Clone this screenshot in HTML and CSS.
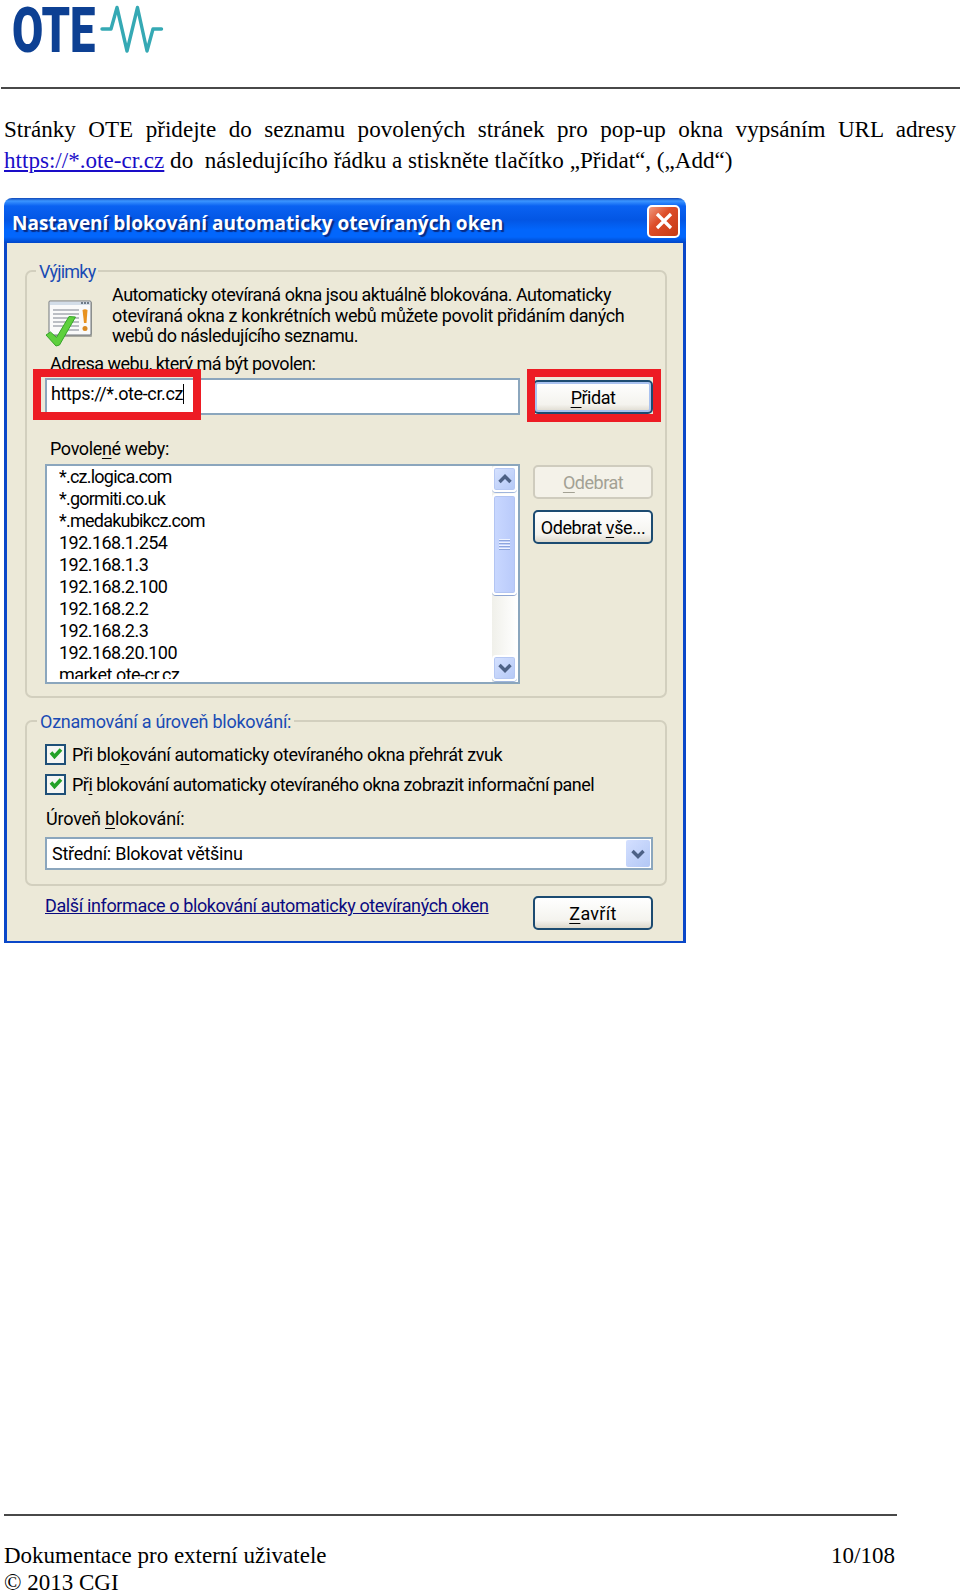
FILE: index.html
```
<!DOCTYPE html>
<html lang="cs">
<head>
  <meta charset="UTF-8" />
  <meta name="viewport" content="width=device-width, initial-scale=1.0"/>
  <title>Dokumentace pro externí uživatele</title>
  <link rel="stylesheet" href="styles.css">
</head>
<body>
  <header class="page-header">
    <svg class="logo" width="170" height="60" viewBox="0 0 170 60">
      <text class="logo-text" transform="translate(12 51.5) scale(0.86 1.33)" textLength="97" lengthAdjust="spacingAndGlyphs">OTE</text>
      <path d="M102 29 H111 L117 7.500 L127 51 L137.500 7.500 L147 51 L153 29 H161.500" fill="none" stroke="#35a9b4" stroke-width="3.400" stroke-linejoin="round" stroke-linecap="round"/>
    </svg>
  </header>

  <p class="intro">
    <span class="intro-line first">Stránky OTE přidejte do seznamu povolených stránek pro pop-up okna vypsáním URL adresy</span>
    <span class="intro-line"><a href="#">https://*.ote-cr.cz</a> do&nbsp; následujícího řádku a stiskněte tlačítko „Přidat“, („Add“)</span>
  </p>

  <div class="dialog">
    <div class="titlebar">
      <span class="title">Nastavení blokování automaticky otevíraných oken</span>
      <button class="close"><svg width="20" height="20" viewBox="0 0 20 20"><path d="M3 3 L17 17 M17 3 L3 17" stroke="#fff" stroke-width="3.200"/></svg></button>
    </div>
    <div class="dialog-body">
      <section class="group exceptions">
        <h2 class="legend legend-exceptions">Výjimky</h2>
        <div class="info">
          <svg class="info-icon" width="50" height="50" viewBox="0 0 50 50">
            <rect x="4" y="3" width="43" height="35" rx="1" fill="#a9a99f"/>
            <rect x="4" y="2" width="42" height="34" rx="1" fill="#fafafa" stroke="#70777d"/>
            <rect x="5" y="3" width="40" height="3" fill="#d3dde8"/>
            <path d="M36 4 h2 M39 4 h2 M42 4 h2" stroke="#4f5b68" stroke-width="1.500"/>
            <path d="M8 11 H34 M8 15 H34 M8 19 H34 M8 23 H34 M8 27 H34 M16 31 H34" stroke="#a7abb3" stroke-width="1.300"/>
            <path d="M37.500 11 Q40 9.500 42.500 11 L41.500 24 H39 Z" fill="#e8921e"/>
            <circle cx="40" cy="29.500" r="2.500" fill="#d98a22"/>
            <path d="M1 36 L5.500 33 L11.500 38.500 L24 17.500 L30.500 18 L14.500 46 L11 47 Z" fill="#5ed03d" stroke="#36a428"/>
          </svg>
          <p class="info-text">
            <span class="tight">Automaticky otevíraná okna jsou aktuálně blokována. Automaticky</span>
            <span>otevíraná okna z konkrétních webů můžete povolit přidáním daných</span>
            <span class="tight">webů do následujícího seznamu.</span>
          </p>
        </div>
        <label class="field-label tight">Adresa webu, který má být povolen:</label>
        <div class="address-row">
          <div class="address-input">https://*.ote-cr.cz<i class="caret"></i><b class="mark mark-url"></b></div>
          <div class="btn btn-default"><span class="tight"><u>P</u>řidat</span><b class="mark mark-add"></b></div>
        </div>
        <label class="field-label list-label">Povole<u>n</u>é weby:</label>
        <div class="list-row">
          <div class="listbox">
            <ul class="sites">
              <li class="host">*.cz.logica.com</li>
              <li class="host">*.gormiti.co.uk</li>
              <li class="host">*.medakubikcz.com</li>
              <li>192.168.1.254</li>
              <li>192.168.1.3</li>
              <li>192.168.2.100</li>
              <li>192.168.2.2</li>
              <li>192.168.2.3</li>
              <li>192.168.20.100</li>
              <li>market.ote-cr.cz</li>
            </ul>
            <div class="scrollbar">
              <div class="scroll-btn"><svg width="14" height="10" viewBox="0 0 14 10"><path d="M1.500 8 L7 2.500 L12.500 8" fill="none" stroke="#4d6185" stroke-width="3.400"/></svg></div>
              <div class="thumb"><i></i><i></i><i></i><i></i></div>
              <div class="scroll-btn down"><svg width="14" height="10" viewBox="0 0 14 10"><path d="M1.500 2 L7 7.500 L12.500 2" fill="none" stroke="#4d6185" stroke-width="3.400"/></svg></div>
            </div>
          </div>
          <div class="list-buttons">
            <div class="btn btn-disabled"><span class="tight"><u>O</u>debrat</span></div>
            <div class="btn btn-all"><span>Odebrat <u>v</u>še...</span></div>
          </div>
        </div>
      </section>

      <section class="group notify">
        <h2 class="legend legend-notify">Oznamování a úroveň blokování:</h2>
        <div class="check"><span class="box"><svg width="14" height="14" viewBox="0 0 14 14"><path d="M2 5.500 L5.500 9.500 L12 2.500" fill="none" stroke="#23a127" stroke-width="3.600"/></svg></span><span>Při blo<u>k</u>ování automaticky otevíraného okna přehrát zvuk</span></div>
        <div class="check"><span class="box"><svg width="14" height="14" viewBox="0 0 14 14"><path d="M2 5.500 L5.500 9.500 L12 2.500" fill="none" stroke="#23a127" stroke-width="3.600"/></svg></span><span class="tight">Př<u>i</u> blokování automaticky otevíraného okna zobrazit informační panel</span></div>
        <label class="level-label">Úroveň <u>b</u>lokování:</label>
        <div class="select"><span>Střední: Blokovat většinu</span>
          <span class="select-btn"><svg width="14" height="10" viewBox="0 0 14 10"><path d="M1.500 2 L7 7.500 L12.500 2" fill="none" stroke="#4d6185" stroke-width="3.400"/></svg></span>
        </div>
      </section>

      <div class="dialog-footer">
        <a class="more" href="#">Další informace o blokování automaticky otevíraných oken</a>
        <div class="btn btn-close"><span><u>Z</u>avřít</span></div>
      </div>
    </div>
  </div>

  <footer class="page-footer">
    <div>Dokumentace pro externí uživatele<br>© 2013 CGI</div>
    <div>10/108</div>
  </footer>
</body>
</html>
```
FILE: styles.css
```
* {
  box-sizing: border-box;
}

body {
  display: flex;
  flex-direction: column;
  height: 1593px;
  margin: 0;
  background: #fff;
  color: #000;
  font-family: "Liberation Serif", serif;
  font-size: 23px;
  overflow: hidden;
}

.page-header {
  height: 89px;
  margin-left: 1px;
  border-bottom: 2px solid #484848;
}

.logo {
  display: block;
  margin-left: -1px;
  overflow: visible;
}

.logo-text {
  font-family: Roboto, sans-serif;
  font-weight: 900;
  font-size: 48px;
  fill: #0d4093;
}

.intro {
  margin: 25px 4px 0;
  height: 84px;
  font-size: 23.1px;
  line-height: 30.5px;
}

.intro-line {
  display: block;
  white-space: nowrap;
}

.intro-line.first {
  white-space: normal;
  text-align-last: justify;
}

.intro a { color: #1a0dc8; }

/* dialog window */
.dialog {
  width: 682px;
  height: 745px;
  margin-left: 4px;
  display: flex;
  flex-direction: column;
  font-family: Roboto, sans-serif;
  font-size: 18px;
  line-height: 20px;
  letter-spacing: -0.37px;
  white-space: nowrap;
}

.tight { letter-spacing: -0.49px; }

.titlebar {
  height: 45px;
  display: flex;
  justify-content: space-between;
  align-items: center;
  padding: 1px 6px 0 8px;
  border-radius: 8px 8px 0 0;
  background: linear-gradient(#1048b8 0, #3b95ff 3px, #0a62f2 8px, #0356e4 22px, #0266fc 32px, #0266fc 39px, #0046c8 45px);
}

.title {
  padding-top: 4px;
  color: #fff;
  font-family: "Open Sans", sans-serif;
  font-weight: 700;
  font-size: 19px;
  letter-spacing: 0;
  text-shadow: 2px 2px 1px #0a2a80;
}

.close {
  display: flex;
  align-items: center;
  justify-content: center;
  width: 33px;
  height: 33px;
  padding: 0;
  border: 2px solid #fff;
  border-radius: 5px;
  background: linear-gradient(135deg, #f09a80, #dd4d28 40%, #c63a14);
}

.dialog-body {
  flex: 1;
  padding: 27px 16px 0 18px;
  background: #ece9d8;
  border: solid #0a47c8;
  border-width: 0 3px 2px 3px;
}

.group {
  border: 2px solid #d2cfbe;
  border-radius: 7px;
}

.exceptions { height: 428px; padding: 0 11px 0 18px; }

.legend {
  width: max-content;
  margin: -10px 0 0 -8px;
  padding: 0 3px;
  background: #ece9d8;
  color: #1a4bb4;
  font-size: 18px;
  font-weight: 400;
}

.legend-exceptions {
  margin-left: -9px;
  letter-spacing: -0.8px;
}

.legend-notify { letter-spacing: -0.23px; }

.info {
  display: flex;
  height: 66px;
  margin-top: 4px;
}

.info-icon { margin-top: 13px; }

.info-text {
  display: flex;
  flex-direction: column;
  align-items: flex-start;
  margin: -1px 0 0 17px;
  line-height: 20.5px;
}

.field-label { display: block; height: 26px; padding: 2px 0 0 5px; }

.address-row {
  display: flex;
  justify-content: space-between;
  padding-right: 1px;
}

.address-input {
  position: relative;
  display: flex;
  width: 475px;
  height: 37px;
  padding: 4px;
  background: #fff;
  border: 2px solid #8ba6bd;
}

.caret { width: 1px; height: 20px; background: #000; }

.btn {
  position: relative;
  display: flex;
  align-items: center;
  justify-content: center;
  width: 120px;
  height: 34px;
  padding-top: 1px;
  border: 2px solid #1c4b71;
  border-radius: 5px;
  background: linear-gradient(#fff, #f4f3ee 75%, #dcd8cc);
}

.btn-default {
  margin-top: 2px;
  box-shadow: inset 0 0 0 2px #a9c2f0;
}

.btn-disabled {
  color: #a3a194;
  border-color: #cfccbe;
  background: #f4f2e9;
}

.btn-close { letter-spacing: 0.3px; }

/* red highlight frames over the form */
.mark {
  position: absolute;
  border: 8px solid #ed1c24;
}

.mark-url { left: -14px; top: -11px; width: 168px; height: 51px; }
.mark-add { left: -8px; top: -13px; width: 134px; height: 53px; }

.list-label { height: 49px; padding-top: 24px; }

.list-row {
  display: flex;
  justify-content: space-between;
  padding-right: 1px;
}

.listbox {
  display: flex;
  justify-content: space-between;
  width: 475px;
  height: 220px;
  padding: 0 1px 3px 12px;
  background: #fff;
  border: 2px solid #8ba6bd;
}

.sites {
  margin: 0;
  padding: 0;
  list-style: none;
  line-height: 22px;
  letter-spacing: -0.54px;
  overflow: hidden;
}

.sites .host { letter-spacing: -0.77px; }

.scrollbar {
  display: flex;
  flex-direction: column;
  width: 25px;
  height: 216px;
  gap: 2px;
  background: linear-gradient(90deg, #f0f0ea, #fff);
}

.scroll-btn {
  display: flex;
  align-items: center;
  justify-content: center;
  height: 26px;
  border: 2px solid #fff;
  border-radius: 4px;
  background: linear-gradient(135deg, #d6e2ff, #b4c8f6);
  box-shadow: inset 0 0 0 1px #b6c8f3, 0 1px 0 #9fb5dc;
}

.scroll-btn.down { margin: auto 0 1px; }

.thumb {
  display: flex;
  flex-direction: column;
  align-items: center;
  justify-content: center;
  gap: 2px;
  height: 101px;
  border: 2px solid #fff;
  border-radius: 4px;
  background: linear-gradient(90deg, #c9d8ff, #b9cafa);
  box-shadow: inset 0 0 0 1px #b3c5f2, 0 1px 0 #8fa6d2;
}

.thumb i { width: 11px; height: 1px; background: #8ea6dc; box-shadow: 0 -1px 0 #eef3ff; }

.list-buttons {
  display: flex;
  flex-direction: column;
  gap: 11px;
  padding-top: 1px;
}

.notify { height: 166px; margin-top: 22px; padding: 0 12px 0 18px; }

.check {
  display: flex;
  align-items: center;
  height: 30px;
}

.check span:last-child { padding-top: 1px; }

.notify .legend { margin-bottom: 7px; }

.box {
  display: flex;
  align-items: center;
  justify-content: center;
  width: 21px;
  height: 21px;
  margin-right: 6px;
  border: 2px solid #1f5078;
  background: #f6f6f3;
}

.level-label {
  display: block;
  height: 38px;
  padding: 10px 0 0 1px;
  letter-spacing: -0.18px;
}

.select {
  display: flex;
  justify-content: space-between;
  height: 33px;
  padding: 1px 1px 1px 5px;
  line-height: 27px;
  letter-spacing: -0.25px;
  background: #fff;
  border: 2px solid #8ba6bd;
}

.select-btn {
  display: flex;
  align-items: center;
  justify-content: center;
  width: 24px;
  border-radius: 2px;
  background: linear-gradient(135deg, #d4e0ff, #b2c7f5);
}

.dialog-footer {
  display: flex;
  justify-content: space-between;
  padding: 10px 14px 0 20px;
}

.more { color: #0b0b80; }

u { text-underline-offset: 3px; }

.page-footer {
  display: flex;
  justify-content: space-between;
  width: 893px;
  height: 79px;
  margin: auto 0 0 4px;
  padding: 27px 2px 0 0;
  border-top: 2px solid #484848;
  line-height: 26.5px;
}
```
